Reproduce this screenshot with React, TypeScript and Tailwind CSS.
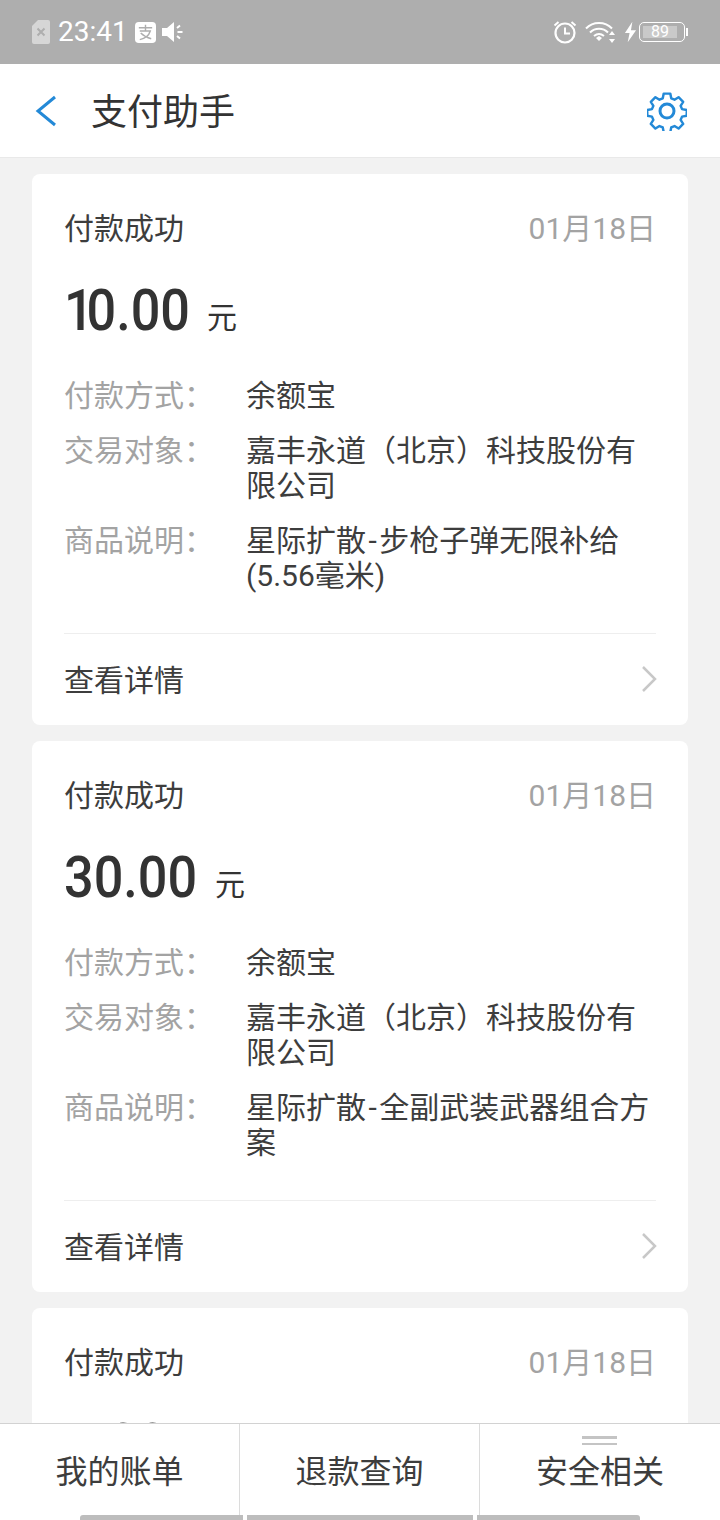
const fontStack = "font-['Roboto','Noto_Sans_CJK_SC',sans-serif]";

interface Payment {
  amount: string;
  goods?: string[];
}

const payments: Payment[] = [
  { amount: "10.00", goods: ["星际扩散-步枪子弹无限补给", "(5.56毫米)"] },
  { amount: "30.00", goods: ["星际扩散-全副武装武器组合方", "案"] },
  { amount: "5.00" },
];

function InfoRow({ label, lines }: { label: string; lines: string[] }) {
  return (
    <div className="flex text-[30px] leading-[35px]">
      <span className="w-[182px] shrink-0 text-[#a3a3a3]">{label}</span>
      <div className="text-[#3d3d3d]">
        {lines.map((line) => {
          const [head, tail] = line.split("-");
          return (
            <div key={line} className="whitespace-nowrap">
              {head}
              {/* the hyphen sits wider here than Roboto sets it */}
              {tail && <span className="mx-[2.500px]">-</span>}
              {tail}
            </div>
          );
        })}
      </div>
    </div>
  );
}

function Amount({ value }: { value: string }) {
  const startsWithOne = value.startsWith("1");
  return (
    <div className="mt-[29px] flex h-[70px] items-baseline text-[#333333]">
      <span className="inline-block origin-left scale-x-[0.9] whitespace-nowrap text-[58px] font-medium leading-[70px]">
        {startsWithOne ? <span className="tracking-[-8px]">1</span> : value[0]}
        {value.slice(1)}
      </span>
      <span className="ml-[3px] -translate-y-[2px] text-[30px]">元</span>
    </div>
  );
}

function PaymentCard({ payment }: { payment: Payment }) {
  return (
    <section className="mx-[32px] mb-[16px] shrink-0 rounded-[8px] bg-white px-[32px]">
      <div className="flex items-center justify-between pt-[37px] text-[30px] leading-[35px]">
        <span className="text-[#3d3d3d]">付款成功</span>
        <span className="text-[#a3a3a3]">01月18日</span>
      </div>
      <Amount value={payment.amount} />
      {payment.goods && (
        <>
          <div className="mt-[33px] flex flex-col gap-[20px]">
            <InfoRow label="付款方式：" lines={["余额宝"]} />
            <InfoRow label="交易对象：" lines={["嘉丰永道（北京）科技股份有", "限公司"]} />
            <InfoRow label="商品说明：" lines={payment.goods} />
          </div>
          <div className="mt-[40px] flex h-[92px] items-center justify-between border-t border-[#eeeeee] pt-[2px]">
            <span className="text-[30px] text-[#3d3d3d]">查看详情</span>
            <svg width="16" height="28" viewBox="0 0 16 28" fill="none" className="mr-[-1px] mt-[-4px]">
              <path d="M2 2l12 12L2 26" stroke="#c8c8c8" strokeWidth="2.500" />
            </svg>
          </div>
        </>
      )}
    </section>
  );
}

function StatusBar() {
  return (
    <div className="flex h-[64px] shrink-0 items-center justify-between bg-[#aeaeae] pl-[32px] pr-[35px] text-white">
      <div className="flex items-center">
        <svg width="18" height="24" viewBox="0 0 18 24" className="mr-[8px]">
          <path d="M6 0h10a2 2 0 0 1 2 2v20a2 2 0 0 1-2 2H2a2 2 0 0 1-2-2V6z" fill="#d6d6d6" />
          <path d="M5.500 8.500l7 7m0-7l-7 7" stroke="#aeaeae" strokeWidth="2" />
        </svg>
        <span className="text-[28px] leading-none text-white">23:41</span>
        <svg width="21" height="21" viewBox="0 0 22 22" className="ml-[7px]">
          <rect width="22" height="22" rx="4" fill="white" />
          <path d="M4 6h14M11 3v6M5 9.500h11c-1.500 5-6 8-11 9M6 11.500c3 3 7 5 11 6" stroke="#aeaeae" strokeWidth="1.500" fill="none" />
        </svg>
        <svg width="22" height="22" viewBox="0 0 22 22" className="ml-[6px]">
          <path d="M0 7h5l7-6v20l-7-6H0z" fill="white" />
          <path d="M15 7l3-2.500M15.500 11h5M15 15l3 2.500" stroke="white" strokeWidth="2" />
        </svg>
      </div>
      <div className="flex items-center">
        <svg width="24" height="24" viewBox="0 0 24 24">
          <circle cx="12" cy="13" r="9.500" stroke="white" strokeWidth="2.200" fill="none" />
          <path d="M12 7.500V13.500H17" stroke="white" strokeWidth="2" fill="none" />
          <path d="M1.500 5.500L5.500 2M22.500 5.500L18.500 2" stroke="white" strokeWidth="2" />
        </svg>
        <svg width="32" height="24" viewBox="0 0 32 24" className="ml-[8px]">
          <path d="M1 8.500C8 1 20 1 27 8.500M5 12.500C10 7.500 18 7.500 23 12.500M9 16C12 13.500 16 13.500 19 16" stroke="white" strokeWidth="2" fill="none" />
          <path d="M11 18l3-2 3 2-3 3z" fill="white" />
          <path d="M27 11l3 4h-6zM27 23l3-4h-6z" fill="white" />
        </svg>
        <svg width="13" height="22" viewBox="0 0 14 22" className="ml-[7px]">
          <path d="M9 0L1 12h5l-2 10 9-13H7.500z" fill="white" />
        </svg>
        <div className="relative ml-[2px] flex h-[20px] w-[46px] items-center rounded-[5px] border border-white p-[3px]">
          <div className="flex h-full w-[34px] items-center justify-center bg-[#c9c9c9] text-[16px] leading-none text-white">89</div>
          <div className="absolute right-[-4px] top-[5px] h-[8px] w-[2px] bg-white" />
        </div>
      </div>
    </div>
  );
}

function Header() {
  return (
    <header className="flex h-[94px] shrink-0 items-center border-b border-[#e9e9e9] bg-white pl-[35px] pr-[33px]">
      <svg width="22" height="32" viewBox="0 0 22 32" className="mr-[34px] shrink-0">
        <path d="M20 2L3 16l17 14" stroke="#2389d7" strokeWidth="3" fill="none" />
      </svg>
      <h1 className="mt-[5px] flex-1 text-[36px] leading-none text-[#333333]">支付助手</h1>
      <svg width="40" height="40" viewBox="0 0 40 40" fill="none" stroke="#2389d7" strokeWidth="2.600" strokeLinejoin="round">
        <circle cx="20" cy="20" r="7" strokeWidth="3" />
        <path d="M16.500 1.500h7l1 5 3.500 1.500 4.300-2.700 4.900 5-2.700 4.200 1.500 3.500 5 1v6l-5 1-1.500 3.500 2.700 4.200-4.900 5-4.300-2.700-3.500 1.500-1 5h-7l-1-5-3.500-1.500-4.300 2.700-4.900-5 2.700-4.200-1.500-3.500-5-1v-6l5-1 1.500-3.500-2.700-4.200 4.900-5 4.300 2.700 3.500-1.500z" transform="translate(1.200 1.200) scale(0.94)" />
      </svg>
    </header>
  );
}

function TabBar() {
  const tabs = ["我的账单", "退款查询", "安全相关"];
  return (
    <footer className="relative flex h-[97px] shrink-0 border-t border-[#d2d2d2] bg-white">
      {tabs.map((tab, i) => (
        <div key={tab} className={`flex w-1/3 justify-center pt-[26px] text-[32px] leading-[45px] text-[#3d3d3d] ${i < 2 ? "border-r border-[#dcdcdc]" : ""}`}>
          {tab}
        </div>
      ))}
      {/* drag handle over the last tab */}
      <div className="absolute left-[582px] top-[12px] flex w-[35px] flex-col gap-[4px]">
        <div className="h-[2.500px] bg-[#c4c4c4]" />
        <div className="h-[2.500px] bg-[#c4c4c4]" />
      </div>
      {/* bottom gesture bars */}
      <div className="absolute bottom-0 left-[80px] flex h-[5px] gap-[4px]">
        <div className="w-[163px] rounded-tl-[3px] bg-[#bdbdbd]" />
        <div className="w-[226px] bg-[#bdbdbd]" />
        <div className="w-[163px] rounded-tr-[3px] bg-[#bdbdbd]" />
      </div>
    </footer>
  );
}

export default function App() {
  return (
    <div className={`flex h-[1520px] w-[720px] flex-col overflow-hidden bg-[#f2f2f2] ${fontStack}`}>
      <StatusBar />
      <Header />
      <main className="flex min-h-0 flex-1 flex-col overflow-hidden pt-[16px]">
        {payments.map((payment) => (
          <PaymentCard key={payment.amount} payment={payment} />
        ))}
      </main>
      <TabBar />
    </div>
  );
}
